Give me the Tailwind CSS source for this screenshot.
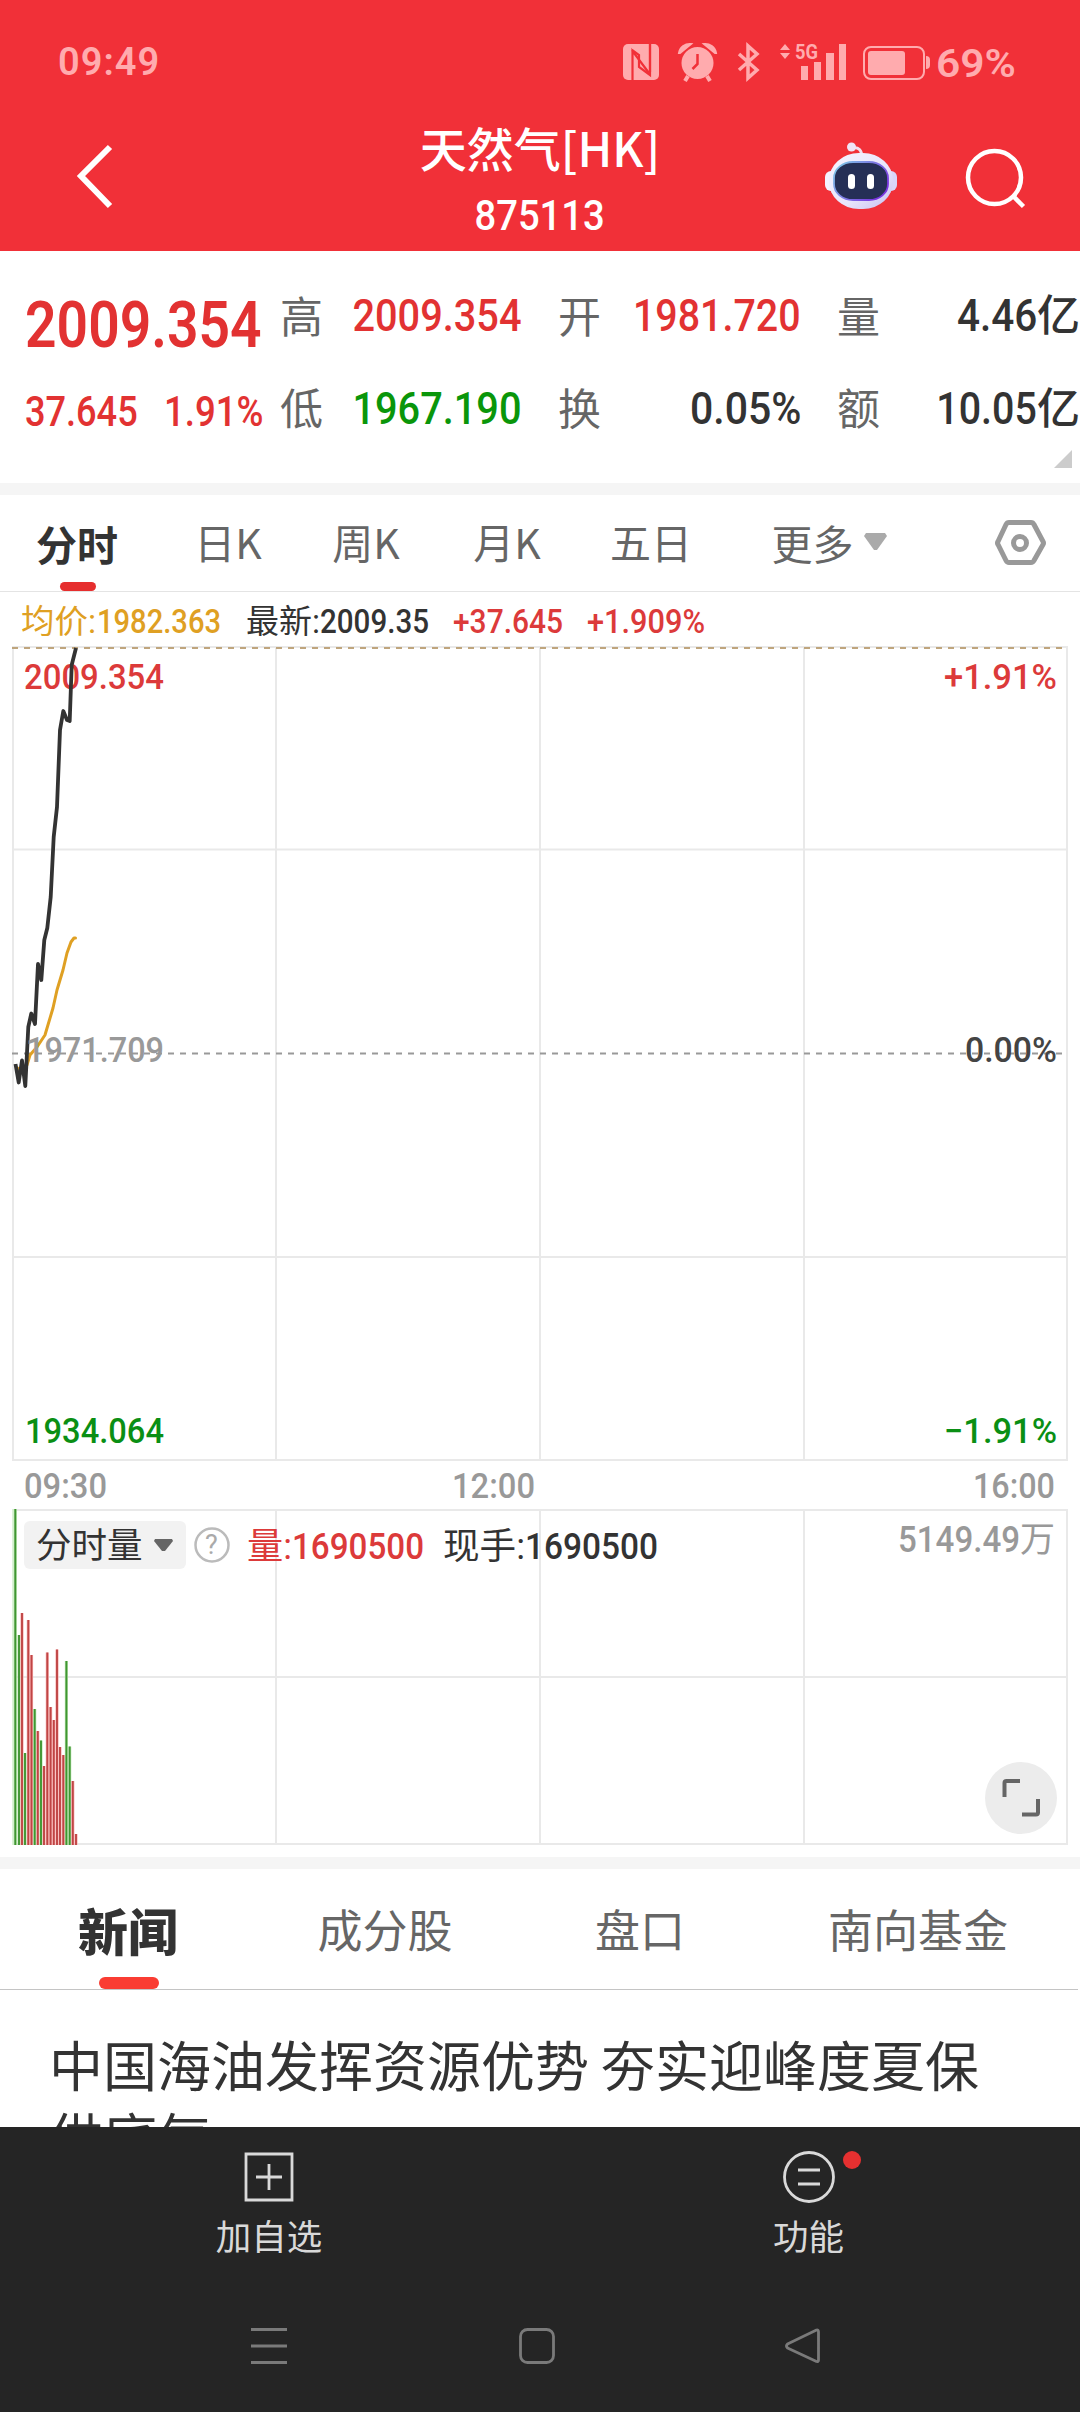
<!DOCTYPE html>
<html lang="zh-CN">
<head>
    <meta charset="UTF-8">
    <title>天然气[HK] 875113</title>
    <script src="https://cdn.jsdelivr.net/npm/@tailwindcss/browser@4"></script>
</head>
<body class="w-[1080px] h-[2412px] overflow-hidden bg-white flex flex-col text-[#333] whitespace-nowrap font-['Roboto','Noto_Sans_CJK_SC',sans-serif]">

    <!-- status bar + title -->
    <header class="h-[251px] shrink-0 bg-[#f13038] text-white flex flex-col">
        <div class="h-[124px] shrink-0 flex items-center pl-[58px] text-[#ffabae]">
            <span class="w-[564px] text-[38px] leading-none font-semibold tracking-[1px]">09:49</span>
            <svg class="w-[400px] h-[124px]" viewBox="622 0 400 124" fill="#ffabae">
                <rect x="623" y="44" width="36" height="36" rx="5"/>
                <path d="M632.500 80V51L649 73M650 44V72" fill="none" stroke="#f13038" stroke-width="2.200"/>
                <path d="M632 50L639 55V67L650 75V44" fill="none" stroke="#f13038" stroke-width="2.200"/>
                <circle cx="697.500" cy="63" r="16"/>
                <path d="M679 53a11 11 0 0 1 12-9l-11 9ZM716 53a11 11 0 0 0-12-9l11 9Z" stroke="#ffabae" stroke-width="2"/>
                <path d="M688 76l-3 5M707 76l3 5" stroke="#ffabae" stroke-width="4"/>
                <path d="M697.500 54v10l-5 5" fill="none" stroke="#f13038" stroke-width="2.500"/>
                <path d="M739 54l18 16-9 8V46l9 8-18 16" fill="none" stroke="#ffabae" stroke-width="3.500"/>
                <path d="M780 50l5-6 5 6ZM780 53l5 6 5-6Z"/>
                <text x="795" y="59" font-size="21" font-weight="700" textLength="23" lengthAdjust="spacingAndGlyphs">5G</text>
                <path d="M801 66h7v14h-7ZM814 62h7v18h-7ZM826 53h8v27h-8ZM839 44h7v36h-7Z"/>
                <rect x="864" y="47" width="60" height="32" rx="7" fill="none" stroke="#ffabae" stroke-width="2"/>
                <rect x="868" y="51" width="37" height="24" rx="3"/>
                <path d="M926 56q4 0 4 4v5q0 4-4 4Z"/>
                <text x="936" y="77" font-size="38" font-weight="600" textLength="80" lengthAdjust="spacingAndGlyphs">69%</text>
            </svg>
        </div>
        <div class="h-[127px] flex">
            <svg class="w-[340px] h-[127px]" viewBox="0 124 340 127">
                <path d="M110 147L81 176l29 30" fill="none" stroke="#fff" stroke-width="6"/>
            </svg>
            <div class="w-[400px] flex flex-col items-center">
                <div class="-mt-[4px] h-[54px] leading-[54px] text-[47px] font-medium font-['Noto_Sans_CJK_SC',sans-serif]">天然气[HK]</div>
                <div class="mt-[21px] leading-[42px] text-[42px] font-medium scale-x-[0.91]">875113</div>
            </div>
            <svg class="w-[340px] h-[127px]" viewBox="740 124 340 127">
                <defs>
                    <linearGradient id="shell" x1="0" y1="0" x2="1" y2="1">
                        <stop offset="0" stop-color="#f6f4ff"/>
                        <stop offset="0.600" stop-color="#e8e5fb"/>
                        <stop offset="1" stop-color="#c6bdf0"/>
                    </linearGradient>
                    <linearGradient id="rim" x1="0" y1="0" x2="1" y2="0.600">
                        <stop offset="0" stop-color="#7fd0e8"/>
                        <stop offset="1" stop-color="#7a35e0"/>
                    </linearGradient>
                </defs>
                <path d="M852 148q10-2 10 10" fill="none" stroke="#f3dfee" stroke-width="3"/>
                <circle cx="851.500" cy="147" r="4.500" fill="#f0e4f6"/>
                <rect x="825" y="171" width="14" height="20" rx="6" fill="#f4f2ff"/>
                <rect x="883" y="171" width="14" height="20" rx="6" fill="#d9d5f9"/>
                <rect x="829" y="153" width="64" height="56" rx="30" ry="27" fill="url(#shell)"/>
                <rect x="834" y="162" width="54" height="38" rx="19" ry="16" fill="#252f56" stroke="url(#rim)" stroke-width="1.800"/>
                <rect x="848" y="174" width="7" height="15" rx="3.500" fill="#fff"/>
                <rect x="867" y="174" width="7" height="15" rx="3.500" fill="#fff"/>
                <circle cx="994.500" cy="177.500" r="26.500" fill="none" stroke="#fff" stroke-width="4.500"/>
                <path d="M1013 196l10.500 10.500" stroke="#fff" stroke-width="4.500"/>
            </svg>
        </div>
    </header>

    <!-- quote -->
    <section class="relative h-[232px] shrink-0 flex leading-[92px] text-[45px] font-medium">
        <div class="w-[280px] pl-[25px] text-[#e23232]">
            <div class="pt-[28px] text-[65px] w-fit origin-left scale-x-[0.85] font-semibold">2009.354</div>
            <div class="-mt-[5px] flex text-[42px]">
                <span class="w-[139px]"><span class="inline-block origin-left scale-x-[0.86]">37.645</span></span>
                <span class="inline-block origin-left scale-x-[0.872]">1.91%</span>
            </div>
        </div>
        <div class="w-[62px] pt-[21px] text-[43px] font-normal text-[#666]">
            <div>高</div>
            <div>低</div>
        </div>
        <div class="w-[180px] pt-[19px] flex flex-col items-end">
            <div class="text-[#e23232] origin-right scale-x-[0.883]">2009.354</div>
            <div class="mt-px text-[#0a960a] origin-right scale-x-[0.883]">1967.190</div>
        </div>
        <div class="w-[73px] pl-[36px] pt-[21px] text-[43px] font-normal text-[#666]">
            <div>开</div>
            <div>换</div>
        </div>
        <div class="w-[206px] pt-[19px] flex flex-col items-end">
            <div class="text-[#e23232] origin-right scale-x-[0.875]">1981.720</div>
            <div class="mt-px origin-right scale-x-[0.91]">0.05%</div>
        </div>
        <div class="w-[79px] pl-[36px] pt-[21px] text-[43px] font-normal text-[#666]">
            <div>量</div>
            <div>额</div>
        </div>
        <div class="w-[200px] pt-[19px] flex flex-col items-end">
            <div class="flex"><span class="origin-right scale-x-[0.9]">4.46</span><span class="text-[43px]">亿</span></div>
            <div class="mt-px flex"><span class="origin-right scale-x-[0.875]">10.05</span><span class="text-[43px]">亿</span></div>
        </div>
        <svg class="absolute right-[8px] bottom-[15px] size-[18px]" viewBox="0 0 18 18"><path d="M18 0v18H0Z" fill="#ccc"/></svg>
    </section>

    <div class="h-[12px] shrink-0 bg-[#f5f5f5]"></div>

    <!-- period tabs -->
    <nav class="h-[97px] shrink-0 border-b border-[#e4e4e4] flex text-[41px] leading-[96px] text-center text-[#666] font-['Noto_Sans_CJK_SC',sans-serif]">
        <div class="w-[154px] relative font-bold text-[#333]">分时
            <div class="absolute left-[60px] bottom-0 w-[36px] h-[9px] rounded-full bg-[#e62e2e]"></div>
        </div>
        <div class="w-[148px] -mt-[2px]">日K</div>
        <div class="w-[128px] -mt-[2px]">周K</div>
        <div class="w-[154px] -mt-[2px]">月K</div>
        <div class="w-[134px] -mt-[2px]">五日</div>
        <div class="w-[222px] -mt-[2px] flex items-center justify-center gap-[10px]">更多
            <svg class="w-[23px] h-[18px]" viewBox="0 0 23 18"><path d="M2 0h19l2 3-10 14h-3L0 3Z" fill="#aaa"/></svg>
        </div>
        <svg class="w-[140px] h-[96px]" viewBox="940 495 140 96" fill="none" stroke="#999" stroke-width="5">
            <path d="M1009 522.500h22q2 0 3 2l9 17q1 1.500 0 3l-9 16q-1 2-3 2h-22q-2 0-3-2l-8-16q-1-1.500 0-3l8-17q1-2 3-2Z"/>
            <circle cx="1020" cy="543" r="6.500"/>
        </svg>
    </nav>

    <!-- price chart -->
    <svg class="w-[1080px] h-[916px] shrink-0 block" viewBox="0 592 1080 916" font-size="35" font-weight="500">
        <g font-size="32.500" fill="#333">
            <text x="21" y="633" font-weight="400" textLength="75" lengthAdjust="spacingAndGlyphs" fill="#dfa023">均价:</text>
            <text x="97" y="633" textLength="124" lengthAdjust="spacingAndGlyphs" fill="#dfa023">1982.363</text>
            <text x="246" y="633" font-weight="400" textLength="74" lengthAdjust="spacingAndGlyphs">最新:</text>
            <text x="320" y="633" textLength="109" lengthAdjust="spacingAndGlyphs">2009.35</text>
            <text x="453" y="633" textLength="110" lengthAdjust="spacingAndGlyphs" fill="#dc3a3a">+37.645</text>
            <text x="587" y="633" textLength="118" lengthAdjust="spacingAndGlyphs" fill="#dc3a3a">+1.909%</text>
        </g>
        <path d="M12 647H1068M12 849.500H1068M12 1257H1068M12 1460H1068M13 646V1461M276 646V1461M540 646V1461M804 646V1461M1067 646V1461" fill="none" stroke="#e9e9e9" stroke-width="2"/>
        <path d="M12 648H1062" stroke="#bfa57d" stroke-width="2" stroke-dasharray="6 6"/>
        <path d="M12 1053.500H1062" stroke="#999" stroke-width="2" stroke-dasharray="6 6"/>
        <g fill="#dc3a3a">
            <text x="24" y="689" textLength="140" lengthAdjust="spacingAndGlyphs">2009.354</text>
            <text x="944" y="689" textLength="113" lengthAdjust="spacingAndGlyphs">+1.91%</text>
        </g>
        <path d="M17 1068l5 2 5-5 3-10 7-8 8-12 8-27 4-18 6-20 4-17 4-11 3-4h1.500" fill="none" stroke="#dfa023" stroke-width="3" stroke-linejoin="round" stroke-linecap="round"/>
        <path d="M15.500 1064L18.700 1082.500 22 1060.500 25.300 1086 28.300 1027 31.300 1013.500 35 1024 38 964 41.300 980 44.300 940 47.300 928 50.700 897 53.700 837 57 807 60 730 63.300 711 67 720 69.700 721 71.700 665 76 648" fill="none" stroke="#333" stroke-width="3.800" stroke-linejoin="round"/>
        <text x="26" y="1062" textLength="138" lengthAdjust="spacingAndGlyphs" fill="#999">1971.709</text>
        <text x="965" y="1062" textLength="92" lengthAdjust="spacingAndGlyphs" fill="#444">0.00%</text>
        <g fill="#0a8f14">
            <text x="25" y="1443" textLength="139" lengthAdjust="spacingAndGlyphs">1934.064</text>
            <text x="944" y="1443" textLength="113" lengthAdjust="spacingAndGlyphs">−1.91%</text>
        </g>
        <g fill="#999" font-weight="500">
            <text x="24" y="1498" textLength="83" lengthAdjust="spacingAndGlyphs">09:30</text>
            <text x="452" y="1498" textLength="83" lengthAdjust="spacingAndGlyphs">12:00</text>
            <text x="973" y="1498" textLength="82" lengthAdjust="spacingAndGlyphs">16:00</text>
        </g>
    </svg>

    <!-- volume chart -->
    <section class="relative h-[349px] shrink-0">
        <svg class="w-[1080px] h-[349px] block" viewBox="0 1508 1080 349" font-size="36" font-weight="500" fill="#333">
            <path d="M12 1510H1068M12 1677H1068M12 1844H1068M13 1509V1845M276 1509V1845M540 1509V1845M804 1509V1845M1067 1509V1845" fill="none" stroke="#e9e9e9" stroke-width="2"/>
            <path d="M13.500 1845V1509" stroke="#dcf3d8" stroke-width="3"/>
            <g id="halo" stroke-width="3.200"></g>
            <g id="bars" stroke-width="1.900"></g>
            <g fill="#dc3a3a">
                <text x="247" y="1559" font-weight="400" textLength="45" lengthAdjust="spacingAndGlyphs">量:</text>
                <text x="292" y="1559" textLength="132" lengthAdjust="spacingAndGlyphs">1690500</text>
            </g>
            <text x="443" y="1559" font-weight="400" textLength="82" lengthAdjust="spacingAndGlyphs">现手:</text>
            <text x="525" y="1559" textLength="133" lengthAdjust="spacingAndGlyphs">1690500</text>
            <g fill="#999">
                <text x="898" y="1552" textLength="122" lengthAdjust="spacingAndGlyphs">5149.49</text>
                <text x="1020" y="1552" font-size="35" font-weight="400">万</text>
            </g>
            <circle cx="212" cy="1545" r="16.500" fill="none" stroke="#bbb" stroke-width="2.500"/>
            <text x="205" y="1554" font-size="27" font-weight="400" fill="#aaa">?</text>
        </svg>
        <div class="absolute left-[24px] top-[13px] w-[162px] h-[48px] rounded-md bg-[#f2f2f2] pl-[12px] pt-[3px] flex items-center gap-[11px] text-[35.500px] leading-none">分时量
            <svg class="w-[19px] h-[13px] -mt-[3px]" viewBox="0 0 19 13"><path d="M1 0h17l1 2-8 10h-3L0 2Z" fill="#666"/></svg>
        </div>
        <div class="absolute left-[985px] top-[254px] size-[72px] rounded-full bg-[#ececec]">
            <svg class="size-[72px]" viewBox="985 1762 72 72" fill="none" stroke="#666" stroke-width="4">
                <path d="M1004.500 1797v-14q0-2 2-2h13.500M1022 1814.500h14q2 0 2-2V1799"/>
            </svg>
        </div>
    </section>

    <div class="h-[12px] shrink-0 bg-[#f5f5f5]"></div>

    <!-- news -->
    <nav class="h-[121px] w-[1078px] shrink-0 border-b border-[#c4c4c4] flex text-[45px] leading-[120px] text-center text-[#666] font-['Noto_Sans_CJK_SC',sans-serif]">
        <div class="w-[256px] relative font-black text-[50px] text-[#333]">新闻
            <div class="absolute left-[99px] bottom-0 w-[60px] h-[12px] rounded-full bg-[#fa3c32]"></div>
        </div>
        <div class="w-[258px]">成分股</div>
        <div class="w-[252px]">盘口</div>
        <div class="w-[304px]">南向基金</div>
    </nav>
    <main class="h-[137px] shrink-0 overflow-hidden pt-[38px] pl-[49px] pr-[80px] text-[54px] leading-[72px] whitespace-normal font-['Noto_Sans_CJK_SC',sans-serif]">
        中国海油发挥资源优势 夯实迎峰度夏保<br>供底气
    </main>

    <!-- bottom bar and system navigation -->
    <footer class="h-[285px] shrink-0 bg-[#252525] text-[#d9d9d9]">
        <div class="h-[140px] flex text-[35.500px]">
            <div class="w-[538px] flex flex-col items-center pt-[25px]">
                <svg class="size-[50px]" viewBox="0 0 50 50" fill="none" stroke="#d9d9d9" stroke-width="2.800">
                    <path d="M2 2h46v46H2ZM25 12v26M12 25h26"/>
                </svg>
                <div class="mt-[12px] leading-[48px]">加自选</div>
            </div>
            <div class="w-[541px] flex flex-col items-center pt-[24px]">
                <div class="relative">
                    <svg class="size-[52px]" viewBox="0 0 52 52" fill="none" stroke="#d9d9d9" stroke-width="2.800">
                        <circle cx="26" cy="26" r="24.500"/>
                        <path d="M15 19h22M15 33h22"/>
                    </svg>
                    <div class="absolute left-[60px] top-0 size-[18px] rounded-full bg-[#e63030]"></div>
                </div>
                <div class="mt-[11px] leading-[48px]">功能</div>
            </div>
        </div>
        <svg class="w-[1080px] h-[145px] block" viewBox="0 2267 1080 145" fill="none" stroke="#7a7a7a" stroke-width="2.800" stroke-linejoin="round">
            <path d="M251 2329.500h36M251 2346h36M251 2362.500h36"/>
            <rect x="520.500" y="2329.500" width="33" height="33" rx="7"/>
            <path d="M818.500 2332v28q0 2-2 1.500L787.500 2348q-2-2 0-4l29-14q2-0.500 2 2Z"/>
        </svg>
    </footer>

    <script>
        const SVG_NS = 'http://www.w3.org/2000/svg';
        // [x, top, up]
        const volumes = [
            [15.3, 1509, 0], [19, 1635, 0], [22, 1613, 1], [25, 1753, 0], [28.3, 1620, 1],
            [31.5, 1655, 1], [34.7, 1709, 0], [37.8, 1731, 1], [41, 1740.5, 0], [44, 1766, 1],
            [47.3, 1652.5, 1], [50.6, 1707, 1], [53.8, 1720, 1], [57, 1649.5, 1], [60, 1747, 1],
            [63.3, 1755, 1], [66.4, 1661, 0], [69.7, 1746.5, 0], [72.8, 1781, 1], [76, 1834, 1]
        ];

        function addBar(group, x, top, color) {
            const line = document.createElementNS(SVG_NS, 'line');
            line.setAttribute('x1', x);
            line.setAttribute('x2', x);
            line.setAttribute('y1', top);
            line.setAttribute('y2', 1845);
            line.setAttribute('stroke', color);
            document.getElementById(group).appendChild(line);
        }

        volumes.forEach(([x, top, up]) => {
            addBar('halo', x, top, up ? '#f9b4b4' : '#bfe6b4');
            addBar('bars', x, top, up ? '#bf4545' : '#3f9632');
        });
    </script>
</body>
</html>
